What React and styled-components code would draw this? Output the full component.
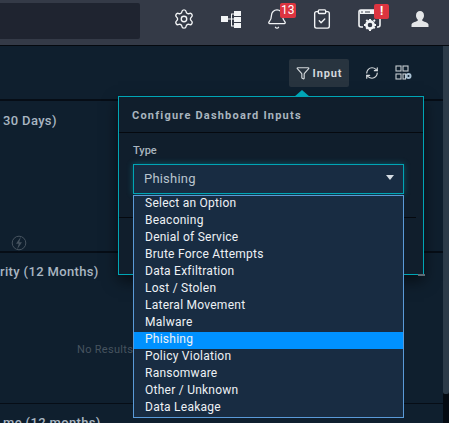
import React from "react";
import styled, { createGlobalStyle } from "styled-components";
import { Settings, Bell, ClipboardCheck, Funnel, RefreshCw } from "lucide-react";

const GlobalStyle = createGlobalStyle`
  * { box-sizing: border-box; }
  html, body { margin: 0; padding: 0; height: 100%; overflow: hidden; background: #0f1f2e; }
  body { font-family: Roboto, "Liberation Sans", sans-serif; }
`;

const Page = styled.div`
  width: 449px;
  height: 423px;
  display: flex;
  flex-direction: column;
  overflow: hidden;
`;

// Top bar
const TopBar = styled.div`
  height: 46px;
  flex: none;
  display: flex;
  align-items: flex-start;
  background: #343a47;
  border-bottom: 1px solid #05090f;
`;

const SearchBox = styled.div`
  width: 140px;
  height: 36px;
  margin-top: 3px;
  background: #1f2430;
  border-radius: 0 2px 2px 0;
`;

const IconRow = styled.div`
  display: flex;
  margin-left: 21px;
`;

const IconSlot = styled.div`
  position: relative;
  width: ${({ $w }) => $w}px;
  height: 38px;
  display: flex;
  align-items: center;
  justify-content: center;
  color: #f2f4f6;
`;

const Badge = styled.span`
  position: absolute;
  left: ${({ $left }) => $left}px;
  top: ${({ $top }) => $top}px;
  height: 15px;
  min-width: 15px;
  padding: 0 1px;
  background: #dc3440;
  border-radius: 2px;
  color: #fff;
  font-size: 12px;
  font-weight: ${({ $bold }) => ($bold ? 700 : 400)};
  line-height: 15px;
  text-align: center;
`;

// Dashboard
const Main = styled.div`
  position: relative;
  flex: 1;
  min-height: 0;
  display: flex;
`;

const Content = styled.div`
  flex: 1;
  min-width: 0;
  display: flex;
  flex-direction: column;
`;

const Scrollbar = styled.div`
  width: 6px;
  flex: none;
  background: #050b12;
`;

const ScrollThumb = styled.div`
  height: 348px;
  background: #2c3b49;
  border-radius: 0 0 2px 2px;
`;

const Toolbar = styled.div`
  height: 55px;
  flex: none;
  display: flex;
  align-items: flex-start;
  justify-content: flex-end;
  padding: 13px 25px 0 0;
  background: #0f1f2e;
  border-bottom: 2px solid #060d16;
`;

const InputButton = styled.div`
  width: 60px;
  height: 28px;
  display: flex;
  align-items: center;
  justify-content: center;
  gap: 3px;
  background: #28343f;
  border-radius: 2px;
  color: #d3d8dc;
  font-size: 11px;
  font-weight: 700;
  letter-spacing: 0.9px;
`;

const ToolIcon = styled.div`
  width: 28px;
  height: 28px;
  margin-left: ${({ $gap }) => $gap}px;
  display: flex;
  align-items: center;
  justify-content: center;
  color: #d6dadd;
`;

const Panel = styled.section`
  height: ${({ $h }) => $h}px;
  flex: none;
  display: flex;
  flex-direction: column;
  padding: ${({ $top }) => $top}px 0 0 ${({ $pad }) => $pad}px;
  background: #0f1f2e;
  border-bottom: ${({ $line }) => $line}px solid #060d16;
`;

const PanelTitle = styled.h3`
  margin: 0;
  color: #a9b6c2;
  font-size: 13px;
  font-weight: 500;
  line-height: 15px;
  letter-spacing: 0.35px;
  white-space: nowrap;
`;

const PanelFoot = styled.div`
  margin-top: auto;
  padding-left: 8px;
  height: 16px;
  color: #46535f;
`;

const NoResults = styled.div`
  margin: 64px 0 0 77px;
  color: #46535f;
  font-size: 11px;
  line-height: 14px;
  letter-spacing: 0.3px;
  white-space: nowrap;
`;

// Popover over the dashboard
const Popover = styled.div`
  position: absolute;
  left: 118px;
  top: 50px;
  width: 306px;
  height: 179px;
  background: #101e2c;
  border: 1px solid #00a5b5;
  box-shadow: 0 6px 14px rgba(0, 0, 0, 0.55);

  &::before {
    content: "";
    position: absolute;
    left: 175px;
    top: -7px;
    border-left: 8px solid transparent;
    border-right: 8px solid transparent;
    border-bottom: 7px solid #00a5b5;
  }
`;

const Handle = styled.span`
  position: absolute;
  right: -2px;
  bottom: -2px;
  width: 7px;
  height: 2px;
  background: #5f6b74;
`;

const PopHead = styled.div`
  height: 36px;
  display: flex;
  align-items: center;
  padding: 1px 0 0 13px;
  border-bottom: 1px solid #05090f;
  color: #a9b5bf;
  font-size: 11px;
  font-weight: 700;
  letter-spacing: 1.2px;
`;

const PopBody = styled.div`
  padding: 11px 19px 0 14px;
`;

const Label = styled.div`
  height: 14px;
  color: #a9b5bf;
  font-size: 11px;
  font-weight: 500;
  line-height: 14px;
`;

const SelectWrap = styled.div`
  position: relative;
  margin-top: 6px;
`;

const SelectBox = styled.div`
  height: 30px;
  display: flex;
  align-items: center;
  justify-content: space-between;
  padding: 0 11px 2px 10px;
  background: #182c42;
  border: 1px solid #00a5b5;
  box-shadow: 0 0 6px rgba(0, 165, 181, 0.45);
  color: #b9c4ce;
  font-size: 13px;
  letter-spacing: 0.2px;
`;

const Caret = styled.span`
  width: 0;
  height: 0;
  margin: -1px -2px 0 0;
  border-left: 4.5px solid transparent;
  border-right: 4.5px solid transparent;
  border-top: 5px solid #d5dde4;
`;

const OptionList = styled.ul`
  position: absolute;
  z-index: 2;
  left: 0;
  right: 0;
  top: 31px;
  margin: 0;
  padding: 0;
  list-style: none;
  background: #182c42;
  border: 1px solid #5a9ad8;
`;

const OptionItem = styled.li`
  height: 17px;
  padding-left: 11px;
  color: #edf1f5;
  background: ${({ $active }) => ($active ? "#0091ff" : "transparent")};
  font-size: 12px;
  line-height: 15px;
  letter-spacing: 0.25px;
  white-space: nowrap;
`;

const PopFootLine = styled.div`
  position: absolute;
  left: 0;
  right: 7px;
  top: 120px;
  height: 1px;
  background: #05090f;
`;

const options = [
  "Select an Option",
  "Beaconing",
  "Denial of Service",
  "Brute Force Attempts",
  "Data Exfiltration",
  "Lost / Stolen",
  "Lateral Movement",
  "Malware",
  "Phishing",
  "Policy Violation",
  "Ransomware",
  "Other / Unknown",
  "Data Leakage",
];

const TreeIcon = () => (
  <svg width="22" height="20" viewBox="0 0 22 20" fill="currentColor">
    <rect x="1" y="7" width="7" height="6" />
    <rect x="14" y="2" width="7" height="5" />
    <rect x="14" y="8" width="7" height="5" />
    <rect x="14" y="14" width="7" height="5" />
    <path d="M8 9.5h3V4.5h3v1h-2v4h2v1h-2v6h2v1h-3v-7H8z" />
  </svg>
);

const WindowGearIcon = () => (
  <svg width="26" height="26" viewBox="0 0 26 26" fill="none">
    <path d="M6 21H4a2 2 0 0 1-2-2V6a2 2 0 0 1 2-2h17a2 2 0 0 1 2 2v13a2 2 0 0 1-2 2h-1" stroke="currentColor" strokeWidth="1.6" />
    <path d="M3 4h19v4H3z" fill="currentColor" />
    <circle cx="5" cy="6" r="0.8" fill="#343a47" />
    <path d="M8 5.5h5v1H8z" fill="#343a47" />
    <circle cx="13" cy="19" r="3.6" stroke="currentColor" strokeWidth="2.6" />
    <path d="M12 13h2v2h-2zM12 23h2v2h-2zM7 18h2v2H7zM17 18h2v2h-2zM8.6 14.4l1.4-1.2 1.2 1.4-1.4 1.2zM15.8 21.6l1.4-1.2 1.2 1.4-1.4 1.2zM17.4 13.3l1.2 1.4-1.4 1.2-1.2-1.4zM10 20.9l1.2 1.4-1.4 1.2-1.2-1.4z" fill="currentColor" />
  </svg>
);

const UserIcon = () => (
  <svg width="18" height="16" viewBox="0 0 18 16" fill="#e4e6e8">
    <path d="M9 0c2.4 0 4 1.8 4 4.4 0 1.7-.7 3.2-1.7 4.1v1.3c.6.7 5.7 1.6 6.2 3.7V16H.5v-2.5c.5-2.1 5.6-3 6.2-3.7V8.5C5.7 7.6 5 6.1 5 4.4 5 1.8 6.6 0 9 0z" />
  </svg>
);

const WidgetsIcon = () => (
  <svg width="18" height="16" viewBox="0 0 18 16" fill="none" stroke="#c6ccd1" strokeWidth="1.1">
    <rect x="1" y="1" width="5" height="5" />
    <rect x="8" y="1" width="5" height="5" />
    <rect x="1" y="9" width="5" height="5" />
    <rect x="8" y="9" width="2.5" height="5" />
    <circle cx="13.5" cy="11" r="2" strokeWidth="2" stroke="#a9c0d2" />
  </svg>
);

const BoltBadge = () => (
  <svg width="16" height="16" viewBox="0 0 16 16" fill="none" stroke="currentColor">
    <circle cx="8" cy="8" r="6.8" strokeWidth="1" />
    <path d="M10 1.5 5 8.8h2.8L6 14.5l5-7.3H8.2z" fill="currentColor" stroke="none" />
  </svg>
);

export default function App() {
  return (
    <Page>
      <GlobalStyle />
      <TopBar>
        <SearchBox />
        <IconRow>
          <IconSlot $w={46}>
            <Settings size={22} strokeWidth={1.5} />
          </IconSlot>
          <IconSlot $w={48}>
            <TreeIcon />
          </IconSlot>
          <IconSlot $w={44}>
            <Bell size={22} strokeWidth={1.4} />
            <Badge $left={25} $top={3}>13</Badge>
          </IconSlot>
          <IconSlot $w={46}>
            <ClipboardCheck size={22} strokeWidth={1.5} />
          </IconSlot>
          <IconSlot $w={50}>
            <WindowGearIcon />
            <Badge $left={29} $top={4} $bold>!</Badge>
          </IconSlot>
          <IconSlot $w={50}>
            <UserIcon />
          </IconSlot>
        </IconRow>
      </TopBar>

      <Main>
        <Content>
          <Toolbar>
            <InputButton>
              <Funnel size={14} strokeWidth={2} />
              Input
            </InputButton>
            <ToolIcon $gap={9}>
              <RefreshCw size={14} strokeWidth={2} />
            </ToolIcon>
            <ToolIcon $gap={4}>
              <WidgetsIcon />
            </ToolIcon>
          </Toolbar>

          <Panel $h={152} $line={2} $pad={3} $top={12}>
            <PanelTitle>30 Days)</PanelTitle>
            <PanelFoot>
              <BoltBadge />
            </PanelFoot>
          </Panel>

          <Panel $h={151} $line={1} $pad={0} $top={11}>
            <PanelTitle>rity (12 Months)</PanelTitle>
            <NoResults>No Results</NoResults>
          </Panel>

          <Panel $h={30} $line={0} $pad={3} $top={11}>
            <PanelTitle>me (12 months)</PanelTitle>
          </Panel>
        </Content>

        <Scrollbar>
          <ScrollThumb />
        </Scrollbar>

        <Popover>
          <PopHead>Configure Dashboard Inputs</PopHead>
          <PopFootLine />
          <PopBody>
            <Label>Type</Label>
            <SelectWrap>
              <SelectBox>
                Phishing
                <Caret />
              </SelectBox>
              <OptionList>
                {options.map((opt) => (
                  <OptionItem key={opt} $active={opt === "Phishing"}>
                    {opt}
                  </OptionItem>
                ))}
              </OptionList>
            </SelectWrap>
          </PopBody>
          <Handle />
        </Popover>
      </Main>
    </Page>
  );
}
